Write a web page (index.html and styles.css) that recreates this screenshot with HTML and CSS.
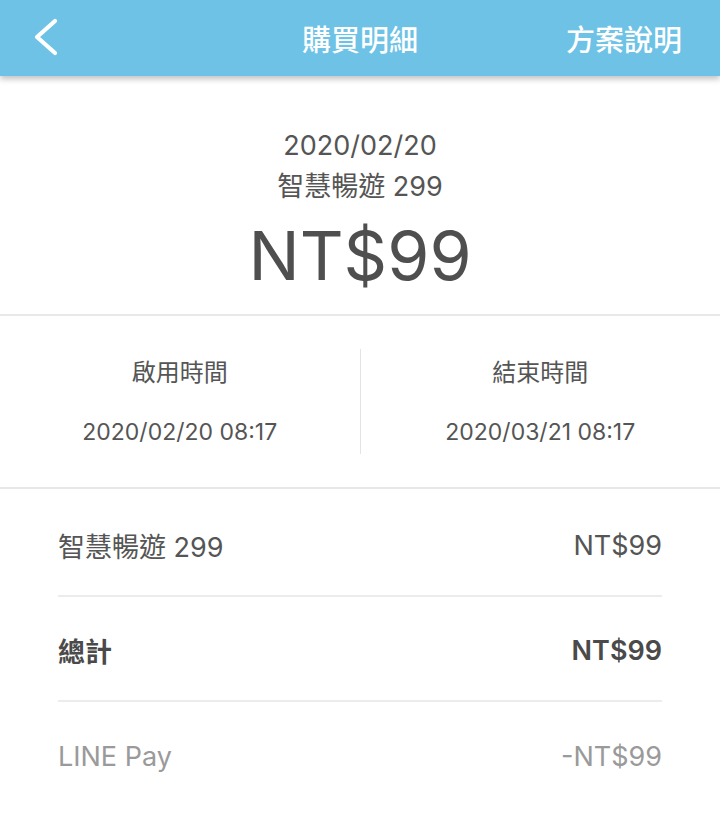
FILE: index.html
```html
<!DOCTYPE html>
<html lang="zh-Hant">
<head>
<meta charset="utf-8">
<link rel="stylesheet" href="styles.css">
</head>
<body>
<header class="topbar">
  <div class="back">
    <svg width="30" height="40" viewBox="0 0 30 40"><polyline points="23,3 5,19 23,35" fill="none" stroke="#fff" stroke-width="4.2" stroke-linecap="round" stroke-linejoin="round"/></svg>
  </div>
  <div class="title">購買明細</div>
  <div class="action">方案說明</div>
</header>
<section class="summary">
  <div class="date">2020/02/20</div>
  <div class="plan">智慧暢遊 299</div>
  <div class="price">NT$99</div>
</section>
<section class="period">
  <div class="col">
    <div class="label">啟用時間</div>
    <div class="time">2020/02/20 08:17</div>
  </div>
  <div class="col">
    <div class="label">結束時間</div>
    <div class="time">2020/03/21 08:17</div>
  </div>
</section>
<section class="rows">
  <div class="row"><span>智慧暢遊 299</span><span>NT$99</span></div>
  <div class="row total"><span>總計</span><span>NT$99</span></div>
  <div class="row pay"><span>LINE Pay</span><span>-NT$99</span></div>
</section>
</body>
</html>
```
FILE: styles.css
```css
* { box-sizing: border-box; }
html, body { margin: 0; padding: 0; background: #fff; }
body {
  font-family: Inter, "Noto Sans CJK TC", sans-serif;
  color: #555;
  width: 720px;
}
.topbar {
  height: 76px;
  background: #6dc2e5;
  display: flex;
  align-items: center;
  padding: 0 38px 0 32px;
  box-shadow: 0 3px 6px rgba(0,0,0,0.25);
  position: relative;
  z-index: 1;
  color: #fff;
}
.back { width: 240px; display: flex; align-items: center; }
.back svg { display: block; }
.title {
  flex: 1;
  text-align: center;
  font-size: 29px;
  font-weight: 500;
  margin-left: 6px;
}
.action {
  width: 240px;
  text-align: right;
  font-size: 29px;
  font-weight: 500;
}
.summary {
  display: flex;
  flex-direction: column;
  align-items: center;
  padding-top: 126px;
  height: 316px;
  margin-top: -76px;
  border-bottom: 2px solid #e8e8e8;
}
.date { font-size: 27px; line-height: 40px; color: #555; }
.plan { font-size: 27px; line-height: 42px; color: #555; }
.price { font-size: 68px; line-height: 92px; color: #4f4f4f; margin-top: 1px; }
.period {
  display: flex;
  height: 173px;
  border-bottom: 2px solid #e8e8e8;
  padding: 33px 0;
}
.col {
  flex: 1;
  display: flex;
  flex-direction: column;
  align-items: center;
}
.col + .col { border-left: 1px solid #e4e4e4; }
.label { font-size: 24px; line-height: 32px; margin-top: 8px; color: #555; }
.time { font-size: 23px; line-height: 32px; margin-top: 27px; color: #555; }
.rows { padding: 3px 58px 0; }
.row {
  display: flex;
  justify-content: space-between;
  align-items: center;
  height: 105px;
  font-size: 27px;
  color: #555;
  border-bottom: 2px solid #ececec;
  padding-top: 4px;
}
.row.total { font-weight: 600; color: #4a4a4a; }
.row.pay { color: #9a9a9a; border-bottom: none; }
```
